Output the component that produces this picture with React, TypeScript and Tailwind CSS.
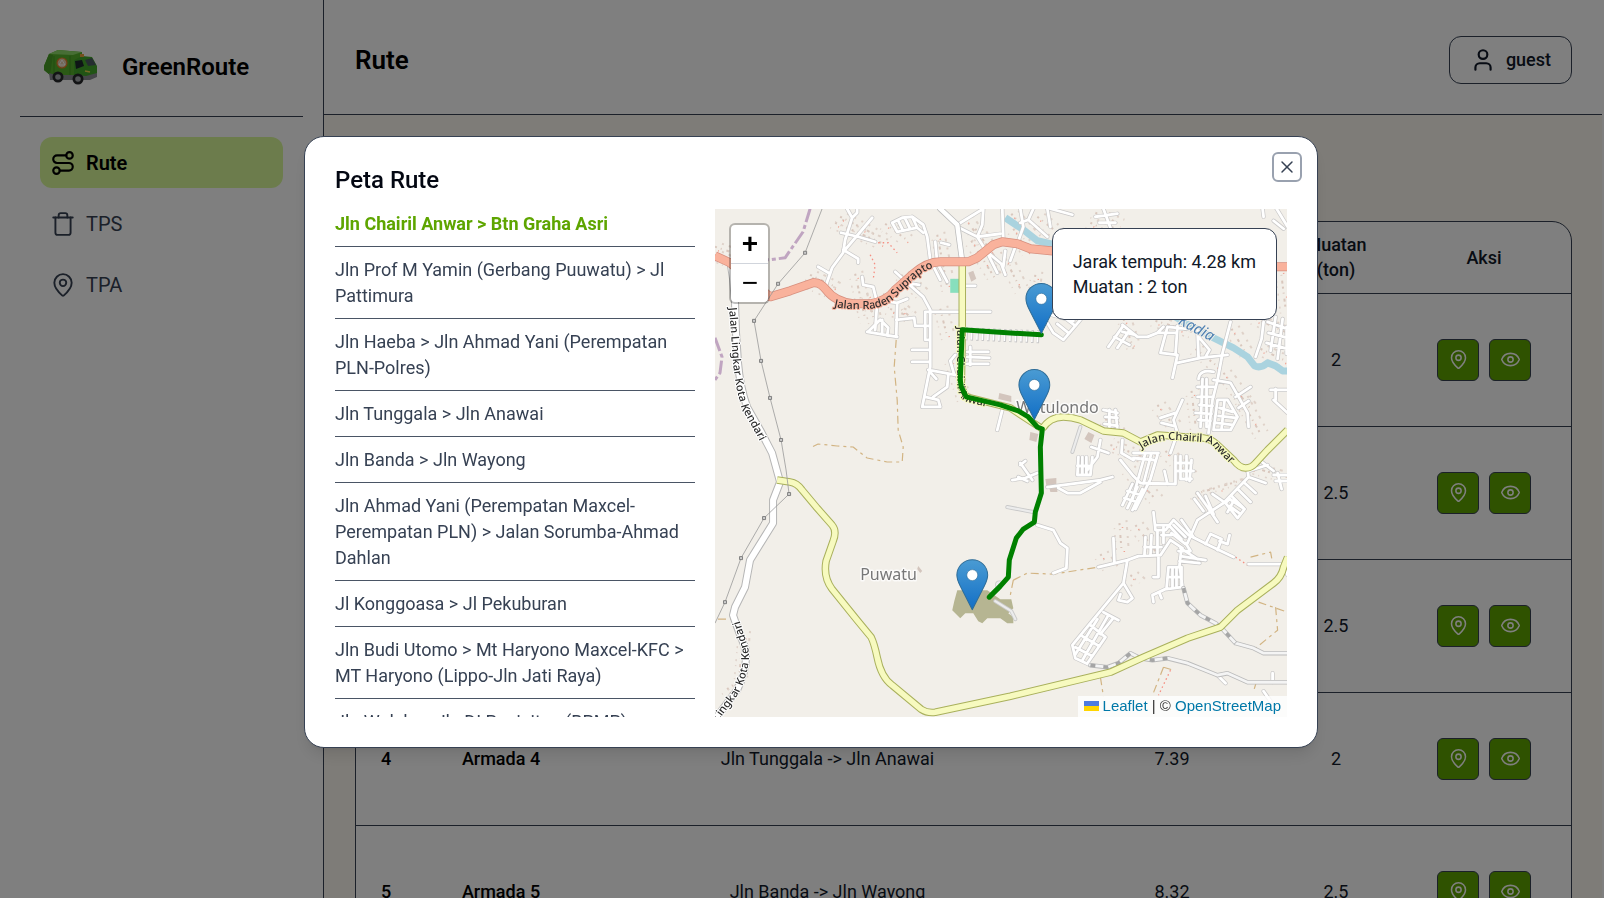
import { useState } from "react";
import { Eye, MapPin, Route, Trash, User, X } from "lucide-react";

const menus = [
  { label: "Rute", icon: Route, active: true },
  { label: "TPS", icon: Trash, active: false },
  { label: "TPA", icon: MapPin, active: false },
];

const armada = [
  { id: 1, rute: "Jln Chairil Anwar -> Btn Graha Asri", jarak: 4.28, muatan: 2 },
  { id: 2, rute: "Jln Prof M Yamin -> Jl Pattimura", jarak: 6.1, muatan: 2.5 },
  { id: 3, rute: "Jln Haeba -> Jln Ahmad Yani", jarak: 5.72, muatan: 2.5 },
  { id: 4, rute: "Jln Tunggala -> Jln Anawai", jarak: 7.39, muatan: 2 },
  { id: 5, rute: "Jln Banda -> Jln Wayong", jarak: 8.32, muatan: 2.5 },
];

const daftarRute = [
  "Jln Chairil Anwar > Btn Graha Asri",
  "Jln Prof M Yamin (Gerbang Puuwatu) > Jl Pattimura",
  "Jln Haeba > Jln Ahmad Yani (Perempatan PLN-Polres)",
  "Jln Tunggala > Jln Anawai",
  "Jln Banda > Jln Wayong",
  "Jln Ahmad Yani (Perempatan Maxcel-Perempatan PLN) > Jalan Sorumba-Ahmad Dahlan",
  "Jl Konggoasa > Jl Pekuburan",
  "Jln Budi Utomo > Mt Haryono Maxcel-KFC > MT Haryono (Lippo-Jln Jati Raya)",
  "Jln Wulele > Jln DI Panjaitan (BPMP)",
];

// residential streets
const streets =
  "M132 0L137 9L130 31L128 44L117 59L110 79M157 9L130 41M142 0V4L137 9M126 24L143 28L160 33M128 41L143 50V54M103 58L115 65" +
  "M147 68L148 76L158 78L162 94L160 121M152 123L182 128M165 111L153 123M165 111L173 119L172 127M167 111V124M182 94L181 128M168 92L182 94L192 90M181 111L199 109L200 117H215" +
  "M180 63L192 74L208 88L215 101V158L207 198H225L223 191L210 188M192 74L204 76M210 103H275M210 103V131H215M197 141H215M197 153H215M213 161L240 166M213 161L221 170M233 166L232 178L218 188" +
  "M242 16L255 8L268 0M242 18L262 28L272 44L282 64M268 0L267 16L262 28M287 0L288 31M273 44L286 55L290 66M262 28L285 25M177 14L182 23L202 19L197 8L187 9ZM183 12L188 22M190 10L195 20M197 8L208 16L212 28L215 51L225 71M220 33L222 54L232 73M226 34L234 36M202 19L208 24" +
  "M252 143H273M252 148L274 149M252 155H273M240 146L235 152L239 166M247 77H260M287 201L282 221M255 138V156" +
  "M305 0L308 18L302 35M313 11L332 28M318 0L313 11L305 14M335 0L357 6M332 0L335 18M290 42L288 58M300 38L295 52M388 0L395 19M380 8L402 5M384 14H400M547 0L548 8M561 0L572 18M558 12L568 20" +
  "M332 114L338 124L348 131L365 111M342 115L353 124M352 111L360 117M336 106L358 112M407 116L422 128H432L442 124L448 118M407 118L393 138M413 123L402 139M399 128L414 136M407 123L420 126M452 118L445 144L462 146L457 169M452 118L482 121L483 148M462 117L460 146M462 154L485 149L512 146M483 128L494 141L490 148M442 124L460 124" +
  "M515 113L507 144L502 171L497 191L493 224M498 171L515 174L523 188L532 204L533 218M520 188L535 178M533 192L523 199M482 178H498M482 188H498M484 196L497 197M480 204L496 205M483 211L495 212M487 170L485 218M491 170V218M483 170Q484 160 498 163M502 191H512L522 208L515 221H498ZM504 199L517 203M503 207L520 209M501 214L517 216M509 192L506 220" +
  "M548 113L546 130L540 148M552 113L572 120M553 124L572 129M551 134L572 140M560 108L555 142M567 110L562 150M571 118V145M467 191L458 211L462 224L455 244M445 209L460 204M446 214L458 217M555 181H571M558 191L572 204M560 180V191M400 201L402 221M388 201L402 204M390 208L402 209M389 215L402 217M394 201V218M385 231L382 248L372 261M376 238L393 244" +
  "M363 248L362 266H375L377 248M367 248V266M371 248V266M362 257H376M407 231L406 244L418 251M418 244H443M418 249L438 251M430 244L417 290M436 244L428 275M442 246L435 270L420 300M417 275L407 296M422 278L412 299M427 280L417 301M412 282L425 286M409 289L421 293M405 251L418 267L425 274L460 275M449 262L452 275M460 247V275M465 247V270H476M471 247V271M476 251L474 272M460 254H476M460 262H478" +
  "M305 254L317 271M310 252L305 256M322 264L310 269L297 271M303 268L312 272M332 278L385 271L397 268M343 279L352 284L365 284L385 273M322 316L338 321L345 334L352 339L351 359L338 364M383 358L412 351L423 347L445 346L455 331L467 339M398 329L399 354M430 328L429 346M436 326L435 346M429 338H446M442 322V345M448 318V334M438 303L440 321H450L458 311L473 326L495 337L518 348M440 316H453M446 326H456M454 317L466 330M458 316L470 328M466 311L478 328M456 324L470 335" +
  "M443 346V368H438M412 351L408 374L375 414L357 436L360 449L375 456M408 374L417 389L412 393L403 391L405 385M388 403L403 411M393 406L367 451M390 428L372 454M375 416L390 428M367 427L384 437M360 438L377 447M382 410L360 445M397 410L385 425M472 334L482 311L508 294L533 268L532 261M465 339L482 350M463 342H475L470 334M465 347L490 351M464 352L484 354M466 339L464 356L467 378M453 358H466V378L451 380ZM457 358V378M461 358V378M452 368H466M452 379L437 386L438 393M444 384L446 389" +
  "M482 284L492 298L502 313M479 290L488 302M490 287L498 305M497 285L510 294M510 294L522 309L529 300L514 290ZM514 297L525 305M512 303L518 292M528 273L540 284M533 268L550 274M523 281L535 293M516 287L528 299M533 262L552 256M545 252L558 262M558 266H572M560 272H572M562 264L566 280M490 335L495 325L506 330L502 341M504 332L512 335L514 326M533 355H572M568 358L572 366M557 464V473M502 466L510 474M548 482L555 492";

const greyRoads =
  "M365 218L357 243M292 298L318 303M283 380Q279 371 288 374M280 392L296 402L300 410";

const tracks =
  "M181 131L179 158L182 191L183 221L188 238L187 253L172 253L152 249L138 238L122 237L103 235L95 239M298 371L312 364L338 365L383 358M298 371L295 386M535 348L555 343L557 354M543 393L572 403M560 398L562 421L540 439M448 458L437 486M385 468L388 487M448 458L458 461M3 410H16M541 472L538 482";

// thin scatter of buildings beside the streets
const houses =
  "M95 66L120 78M90 72L118 84M120 14L166 34M125 8L160 26M140 65L150 110M152 84L160 116M168 85L195 108M175 100L190 106M186 66L206 84M225 100L232 128M222 26L232 78M260 20L288 60M256 32L280 70M170 15L190 30M235 150L248 190M0 38L18 44M0 46L14 52M250 10L266 32M296 5L318 30M322 8L345 26M290 50L305 80M380 4L402 14M375 14L395 24M408 110L418 140M440 112L480 124M480 140L505 160M516 120L530 144M540 110L572 124M545 140L570 152M508 164L535 200M476 182L480 216M525 190L545 225M442 196L458 216M395 236L440 252M412 260L440 290M450 242L476 268M480 285L530 270M535 258L572 268M404 314L406 340M390 210L404 225M385 345L395 360M415 366L424 374M28 425L24 470M12 480L26 470M420 316L440 342M508 60L540 104M565 60L570 100M320 66L318 80M298 20L312 42";

const ringRoad =
  "M15 50L18 70L20 94L21 124L23 154Q25 178 32 198L45 221L57 244L65 273L58 291V314L35 351L30 378L20 398L18 406Q22 418 30 438Q34 456 22 481L0 510";

const suprapto =
  "M0 47L15 54L55 88L75 82L98 74Q105 73 111 81Q120 93 138 95H155Q172 92 180 81L198 65Q212 53 225 53H253L262 49L278 36L287 33L302 35L315 40L335 42L380 46L480 58H572";

const southRoad =
  "M62 271L75 273Q82 274 87 281L102 299L117 316Q122 322 118 332L111 352Q108 368 117 380L142 411L156 428Q159 434 162 448Q166 468 177 476L206 500Q212 504 220 503L295 487L395 463L428 448L472 429L505 418L522 401L558 374Q566 368 568 358L572 348";

const chairil =
  "M327 220Q334 208 348 208Q356 208 365 211L388 222L408 224L425 233L442 226L472 228L488 229Q496 230 502 236L518 251Q524 259 530 259Q536 259 540 254L552 241L572 221";

const river =
  "M290 9L308 21L322 32L335 35L400 72L468 113L498 129L518 139L532 148L539 157Q545 160 552 154L560 157L567 162H572";

function Pin({ x, y }: { x: number; y: number }) {
  return (
    <g transform={`translate(${x - 16} ${y - 51})`}>
      <path
        d="M16 .6C7.300.6.600 7.600.600 16c0 4.200 1.600 7.500 3.400 11L16 50.500l12-23.500c1.800-3.500 3.400-6.800 3.400-11C31.400 7.600 24.700.6 16 .6z"
        fill="url(#pin)"
        stroke="#2e6c97"
      />
      <circle cx="16" cy="16" r="5.500" fill="#fff" stroke="#2e6c97" strokeWidth=".6" />
    </g>
  );
}

function Peta() {
  return (
    <svg
      viewBox="0 0 571 508"
      preserveAspectRatio="xMidYMid slice"
      className="block size-full bg-[#f2efe9]"
      fill="none"
      strokeLinejoin="round"
      role="img"
      aria-label="Peta Rute"
    >
      <defs>
        <linearGradient id="pin" x1="0" y1="0" x2="0" y2="1">
          <stop offset="0" stopColor="#4a9bd3" />
          <stop offset="1" stopColor="#126fc6" />
        </linearGradient>
        <path id="teks-suprapto" d="M119 98Q128 100 138 100H155Q176 97 184 84L202 68Q214 58 228 57H260" />
        <path id="teks-kendari" d="M14 99L16 124L18 154Q20 178 27 200L40 223L52 246L61 274" />
        <path id="teks-kendari-2" d="M3 512L24 484Q37 456 33 438L23 406L21 390" />
        <path id="teks-chairil" d="M426 240Q444 228 472 232L488 233Q496 234 499 239L516 256L530 266" />
        <path id="teks-chairil-2" d="M242 118V176Q243 190 252 193L300 205" />
        <path id="teks-kadia" d="M462 115L506 138" />
      </defs>

      <path d={houses} stroke="#d9c7bd" strokeWidth="2" strokeDasharray="2 4 1 5 3 3" />
      <path d={houses} stroke="#dfd2c9" strokeWidth="2" strokeDasharray="2 5 3 6" transform="translate(7 -3)" />
      <path d={houses} stroke="#e0d3cb" strokeWidth="1.500" strokeDasharray="1 6 2 4" transform="translate(-5 5)" />
      <path d={houses} stroke="#f0a090" strokeWidth="1.500" strokeDasharray="1 23" transform="translate(3 4)" />
      <g fill="#d3c5bd">
        <path d="M284 184L296 187V193L283 190ZM315 223L323 225L321 233L314 231ZM373 223L379 226L376 234L369 230ZM330 270L341 269V276L331 277ZM334 279L342 278V283H335ZM253 64L258 62L261 70L256 73ZM203 357L207 362L205 364L202 360Z" />
      </g>
      <rect x="235" y="70" width="9" height="14" fill="#88dfbd" />
      <path d="M242 381L272 381L285 390H296L298 399L293 404L298 408V414H292L285 409H272L267 414L263 412L258 404L250 404L245 409L237 401L239 392Z" fill="#b6b592" />
      <path d={river} stroke="#aad3df" strokeWidth="7" />

      <path d="M95 0L88 23L70 49L55 51H0M0 129L7 148L5 164L0 171" stroke="#c0a5c1" strokeWidth="3" strokeDasharray="14 3 4 3" />
      <path d={tracks} stroke="#d2b483" strokeWidth="1.200" strokeDasharray="8 4 3 4" />
      <path d="M163 34H173L182 44M155 46L160 56L158 71M455 461L443 486M520 348L532 356" stroke="#f58d80" strokeWidth="1.300" strokeDasharray="1.500 3" />

      <g strokeLinecap="round">
        <path d={greyRoads} stroke="#c9c9c9" strokeWidth="4" />
        <path d={greyRoads} stroke="#ececec" strokeWidth="2.200" />
        <path d={streets} stroke="#c9c8c8" strokeWidth="4.200" />
        <path d={streets} stroke="#fff" strokeWidth="2.800" />
        <path d="M250 125L326 128" stroke="#c9c8c8" strokeWidth="13" strokeDasharray="2.500 3" strokeLinecap="butt" />
        <path d="M250 125L326 128" stroke="#fff" strokeWidth="11" strokeDasharray="1.500 4" strokeLinecap="butt" />
        <path d="M468 379L472 394L485 406L500 414L508 421L520 434L538 439L548 444H572M375 456L392 458L403 454L415 444L425 449L437 451L452 449L472 454L502 466L512 464L532 473H572" stroke="#bbb" strokeWidth="4.500" />
        <path d="M468 379L472 394L485 406L500 414L508 421L520 434L538 439L548 444H572M375 456L392 458L403 454L415 444L425 449L437 451L452 449L472 454L502 466L512 464L532 473H572" stroke="#f4f4f4" strokeWidth="2.800" />
        <path d="M468 379L472 394L485 406L500 414L508 421L520 434M375 456L392 458L403 454L415 444L425 449L437 451L452 449" stroke="#a5a5a5" strokeWidth="3.500" strokeDasharray="5 8" strokeLinecap="butt" />
        <path d="M225 0L242 16L247 53" stroke="#bbb" strokeWidth="6" />
        <path d="M225 0L242 16L247 53" stroke="#fff" strokeWidth="4.500" />
      </g>

      <path d={ringRoad} stroke="#b5b5b5" strokeWidth="8" />
      <path d={ringRoad} stroke="#fff" strokeWidth="6" />
      <g stroke="#a9b05c" strokeWidth="7.500">
        <path d="M247 56V121L246 178L251 188L295 199L327 220" />
        <path d={southRoad} />
        <path d={chairil} />
      </g>
      <g stroke="#f7fabf" strokeWidth="5.500">
        <path d="M247 56V121L246 178L251 188L295 199L327 220" />
        <path d={southRoad} />
        <path d={chairil} />
      </g>
      <path d={suprapto} stroke="#d78f7e" strokeWidth="9" />
      <path d={suprapto} stroke="#f9b29c" strokeWidth="7.500" />

      <path d="M107 0L90 44L63 75L39 112L46 152L55 189L66 231L71 261L74 285L49 309L26 349L10 393L0 414" stroke="#9a9a9a" strokeWidth=".8" />
      <g fill="#ccc" stroke="#777" strokeWidth=".9">
        <path d="M88.500 42.500h3v3h-3zM61.500 73.500h3v3h-3zM37.500 110.500h3v3h-3zM44.500 150.500h3v3h-3zM53.500 187.500h3v3h-3zM64.500 229.500h3v3h-3zM72.500 283.500h3v3h-3zM47.500 307.500h3v3h-3zM24.500 347.500h3v3h-3zM8.500 391.500h3v3h-3z" />
      </g>

      <g fontFamily="Noto Sans, sans-serif" paintOrder="stroke" strokeLinejoin="round">
        <g fontSize="12" fontWeight="500" fill="#2d2d2d" strokeWidth="2">
          <text fontSize="11" stroke="#f9b29c"><textPath href="#teks-suprapto">Jalan Raden Suprapto</textPath></text>
          <text fontSize="11" stroke="#fff"><textPath href="#teks-kendari">Jalan Lingkar Kota Kendari</textPath></text>
          <text fontSize="11" stroke="#fff"><textPath href="#teks-kendari-2">Lingkar Kota Kendari</textPath></text>
        </g>
        <g fontSize="11" fontWeight="500" fill="#2d2d2d" strokeWidth="2" stroke="#f7fabf">
          <text><textPath href="#teks-chairil">Jalan Chairil Anwar</textPath></text>
          <text><textPath href="#teks-chairil-2">Jalan Chairil Anwar</textPath></text>
        </g>
        <text fontSize="15" fontStyle="italic" fill="#4d80b3" stroke="#f2efe9" strokeWidth="2">
          <textPath href="#teks-kadia">Kadia</textPath>
        </text>
        <g fontSize="16" fill="#777" stroke="#fff" strokeOpacity=".7" strokeWidth="3">
          <text x="301" y="204">Watulondo</text>
          <text x="145" y="371">Puwatu</text>
        </g>
      </g>

      <path
        d="M326 126L247 121L245 171L246 178L251 188L285 196L303 202L313 208L322 218L327 220L325 238L326 284L320 303L319 313L308 320L301 329L294 351L293 368L285 377L274 388"
        stroke="#008000"
        strokeWidth="5"
        strokeLinecap="round"
      />
      <Pin x={326} y={125} />
      <Pin x={319} y={211} />
      <Pin x={257} y={401} />
    </svg>
  );
}

function Logo() {
  return (
    <svg viewBox="0 0 54 36" className="w-[54px] h-9" aria-hidden="true">
      <path d="M5 5L14 1L38 3V27L28 30L6 26L0 21V17Z" fill="#57b32c" />
      <path d="M5 5L14 1L38 3L29 6Z" fill="#8fdc6a" />
      <path d="M5 5L0 17V21L6 26L9 6Z" fill="#489f26" />
      <path d="M10 7V26M26 7V28" stroke="#3f9420" strokeWidth=".8" />
      <path d="M30 11L38 7L48 8L53 17V25L44 29H30Z" fill="#43a82b" />
      <path d="M31 12L38 11L40 17L32 20Z" fill="#1d2a2c" />
      <path d="M41 11L48 9L52 16L44 17Z" fill="#4a5b60" />
      <path d="M36 5H40V8H36Z" fill="#e9a13a" />
      <path d="M5 24L12 26H28L42 27L53 24V28L46 31H6Z" fill="#8a8d92" />
      <path d="M41 22L46 23" stroke="#e8d34a" strokeWidth="1.500" />
      <circle cx="18" cy="14" r="5" fill="#e8cfae" stroke="#e77a28" strokeWidth="1.200" />
      <path d="M18 11L21 16H15Z" fill="none" stroke="#fff" />
      <circle cx="14" cy="28" r="5.500" fill="#26282b" />
      <circle cx="14" cy="28" r="2.800" fill="#a5a9ad" />
      <circle cx="34" cy="30" r="5.500" fill="#26282b" />
      <circle cx="34" cy="30" r="2.800" fill="#a5a9ad" />
    </svg>
  );
}

function Sidebar() {
  return (
    <aside className="w-[324px] shrink-0 bg-white border-r border-gray-700 px-5">
      <div className="flex items-center gap-6 h-[117px] pt-[18px] pl-6 border-b border-gray-700">
        <Logo />
        <span className="text-2xl font-semibold text-black">GreenRoute</span>
      </div>
      <nav className="flex flex-col gap-[10px] px-5 pt-5">
        {menus.map(({ label, icon: Icon, active }) => (
          <a
            key={label}
            href={`#${label.toLowerCase()}`}
            className={
              active
                ? "flex items-center gap-[10px] h-[51px] px-[10px] rounded-xl bg-lime-200 text-xl font-semibold text-black"
                : "flex items-center gap-[10px] h-[51px] px-[10px] rounded-xl text-xl text-gray-700"
            }
          >
            <Icon size={26} strokeWidth={active ? 2 : 1.75} />
            {label}
          </a>
        ))}
      </nav>
    </aside>
  );
}

function RuteTable() {
  return (
    <div className="rounded-[20px] border border-gray-700 bg-white overflow-hidden">
      <table className="w-full table-fixed text-center text-lg leading-[25px] text-gray-900">
        <thead>
          <tr className="h-[71px] border-b border-gray-700">
            <th className="w-[60px] font-medium">No</th>
            <th className="w-[170px] font-medium">Armada</th>
            <th className="font-medium">Rute</th>
            <th className="w-[206px] font-medium">Jarak (km)</th>
            <th className="w-[122px] px-6 font-medium">Muatan (ton)</th>
            <th className="w-[174px] font-medium">Aksi</th>
          </tr>
        </thead>
        <tbody>
          {armada.map((item) => (
            <tr key={item.id} className="h-[133px] border-b border-gray-700">
              <td className="font-medium text-black">{item.id}</td>
              <td className="font-medium text-black">Armada {item.id}</td>
              <td>{item.rute}</td>
              <td>{item.jarak}</td>
              <td>{item.muatan}</td>
              <td>
                <div className="flex justify-center gap-[10px]">
                  <button aria-label="Lihat peta" className="flex items-center justify-center size-[42px] rounded-md border border-gray-700 bg-[#5ea500] text-white">
                    <MapPin size={21} strokeWidth={1.75} />
                  </button>
                  <button aria-label="Lihat detail" className="flex items-center justify-center size-[42px] rounded-md border border-gray-700 bg-[#5ea500] text-white">
                    <Eye size={21} strokeWidth={1.75} />
                  </button>
                </div>
              </td>
            </tr>
          ))}
        </tbody>
      </table>
    </div>
  );
}

function PetaModal() {
  const [selected, setSelected] = useState(0);

  return (
    <div className="fixed inset-0 flex items-center justify-center bg-black/50 pl-[18px] pb-[14px]">
      <div
        role="dialog"
        aria-label="Peta Rute"
        className="relative w-full max-w-[1014px] rounded-[20px] border border-gray-700 bg-white px-[30px] pb-[30px] pt-6 shadow-lg"
      >
        <h2 className="h-12 text-2xl leading-[38px] font-medium text-gray-950">Peta Rute</h2>
        <div className="flex gap-5 h-[508px]">
          <ul className="flex-[360] min-w-0 overflow-hidden">
            {daftarRute.map((rute, i) => (
              <li key={rute} className="border-b border-gray-600 pt-[10px] pb-[9px] first:pt-[2px]">
                <button
                  onClick={() => setSelected(i)}
                  className={
                    i === selected
                      ? "block w-full text-left text-lg leading-[26px] font-bold text-[#5ea500]"
                      : "block w-full text-left text-lg leading-[26px] text-gray-700"
                  }
                >
                  {rute}
                </button>
              </li>
            ))}
          </ul>
          <div className="relative flex-[571] min-w-0 overflow-hidden">
            <Peta />
            <div className="absolute left-[14px] top-[14px] flex flex-col w-[41px] rounded-md border-2 border-black/25 bg-white bg-clip-padding font-['Liberation_Sans',sans-serif] text-[28px] leading-[38px] text-black">
              <button aria-label="Zoom in" className="h-[39px] border-b border-gray-300 font-bold">+</button>
              <button aria-label="Zoom out" className="h-[38px]">−</button>
            </div>
            <div className="absolute right-[10px] top-[19px] rounded-xl border border-gray-700 bg-white p-5 text-lg leading-[25px] text-gray-900">
              <p>Jarak tempuh: 4.28 km</p>
              <p>Muatan : 2 ton</p>
            </div>
            <div className="absolute right-0 bottom-0 flex items-center gap-1 bg-white/80 px-[6px] pb-[2px] font-['Liberation_Sans',sans-serif] text-[15px] leading-[19px] text-[#333]">
              <svg viewBox="0 0 12 8" className="w-[15px] h-[10px]" aria-hidden="true">
                <path fill="#4C7BE1" d="M0 0h12v4H0z" />
                <path fill="#FFD500" d="M0 4h12v4H0z" />
              </svg>
              <p>
                <a href="#leaflet" className="text-[#0078a8]">Leaflet</a> | ©{" "}
                <a href="#osm" className="text-[#0078a8]">OpenStreetMap</a>
              </p>
            </div>
          </div>
        </div>
        <button
          aria-label="Tutup"
          className="absolute right-[15px] top-[15px] flex items-center justify-center size-[30px] rounded-md border-2 border-gray-400 text-gray-700"
        >
          <X size={20} strokeWidth={1.75} />
        </button>
      </div>
    </div>
  );
}

export default function App() {
  return (
    <div className="flex h-screen overflow-hidden bg-white pr-0.5 font-[Roboto,sans-serif]">
      <Sidebar />
      <div className="flex-1 min-w-0 flex flex-col">
        <header className="flex items-center justify-between h-[115px] shrink-0 pl-[31px] pr-[30px] pt-[6px] border-b border-gray-700">
          <h1 className="text-[26px] font-semibold text-black">Rute</h1>
          <button className="flex items-center gap-[10px] h-12 px-5 rounded-xl border border-gray-700 text-lg font-medium text-gray-900">
            <User size={26} strokeWidth={2} />
            guest
          </button>
        </header>
        <main className="flex-1 min-h-0 bg-[#fdf9f1] pl-[31px] pr-[30px] pt-[106px]">
          <RuteTable />
        </main>
      </div>
      <PetaModal />
    </div>
  );
}
